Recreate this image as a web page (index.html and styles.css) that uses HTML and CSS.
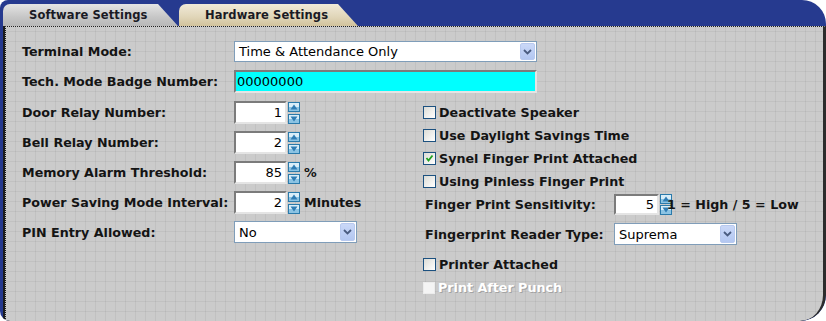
FILE: index.html
```html
<!DOCTYPE html>
<html>
<head>
<meta charset="utf-8">
<link rel="stylesheet" href="styles.css">
</head>
<body>
<div class="frame">
  <div class="tabs">
    <div class="tab tab-soft">Software Settings</div>
    <div class="tab tab-hard">Hardware Settings</div>
  </div>
  <div class="panel">
    <div class="row row-sel">
      <span class="lbl">Terminal Mode:</span>
      <div class="select sel-wide"><span class="val">Time &amp; Attendance Only</span><span class="btn"><svg width="9" height="6" viewBox="0 0 9 6"><path d="M1 1 L4.5 4.5 L8 1" fill="none" stroke="#4a5c80" stroke-width="1.8"/></svg></span></div>
    </div>
    <div class="row row-inp">
      <span class="lbl">Tech. Mode Badge Number:</span>
      <div class="inp inp-cyan">00000000</div>
    </div>
    <div class="cols">
      <div class="col-left">
        <div class="row row-spin">
          <span class="lbl">Door Relay Number:</span>
          <div class="inp inp-num">1</div>
          <div class="spin"><svg class="sp" width="12" height="10" viewBox="0 0 12 10"><rect x="0.5" y="0.5" width="11" height="9" fill="#8cc4e4" stroke="#2a7aab"/><rect x="1" y="1" width="10" height="4" fill="#d9eef9"/><path d="M2.5 7.5 L6 2.5 L9.5 7.5 Z" fill="#2f7cb4"/></svg><svg class="sp" width="12" height="10" viewBox="0 0 12 10"><rect x="0.5" y="0.5" width="11" height="9" fill="#8cc4e4" stroke="#2a7aab"/><rect x="1" y="1" width="10" height="4" fill="#d9eef9"/><path d="M2.5 2.5 L6 7.5 L9.5 2.5 Z" fill="#2f7cb4"/></svg></div>
        </div>
        <div class="row row-spin">
          <span class="lbl">Bell Relay Number:</span>
          <div class="inp inp-num">2</div>
          <div class="spin"><svg class="sp" width="12" height="10" viewBox="0 0 12 10"><rect x="0.5" y="0.5" width="11" height="9" fill="#8cc4e4" stroke="#2a7aab"/><rect x="1" y="1" width="10" height="4" fill="#d9eef9"/><path d="M2.5 7.5 L6 2.5 L9.5 7.5 Z" fill="#2f7cb4"/></svg><svg class="sp" width="12" height="10" viewBox="0 0 12 10"><rect x="0.5" y="0.5" width="11" height="9" fill="#8cc4e4" stroke="#2a7aab"/><rect x="1" y="1" width="10" height="4" fill="#d9eef9"/><path d="M2.5 2.5 L6 7.5 L9.5 2.5 Z" fill="#2f7cb4"/></svg></div>
        </div>
        <div class="row row-spin">
          <span class="lbl">Memory Alarm Threshold:</span>
          <div class="inp inp-num">85</div>
          <div class="spin"><svg class="sp" width="12" height="10" viewBox="0 0 12 10"><rect x="0.5" y="0.5" width="11" height="9" fill="#8cc4e4" stroke="#2a7aab"/><rect x="1" y="1" width="10" height="4" fill="#d9eef9"/><path d="M2.5 7.5 L6 2.5 L9.5 7.5 Z" fill="#2f7cb4"/></svg><svg class="sp" width="12" height="10" viewBox="0 0 12 10"><rect x="0.5" y="0.5" width="11" height="9" fill="#8cc4e4" stroke="#2a7aab"/><rect x="1" y="1" width="10" height="4" fill="#d9eef9"/><path d="M2.5 2.5 L6 7.5 L9.5 2.5 Z" fill="#2f7cb4"/></svg></div>
          <span class="unit">%</span>
        </div>
        <div class="row row-spin">
          <span class="lbl">Power Saving Mode Interval:</span>
          <div class="inp inp-num">2</div>
          <div class="spin"><svg class="sp" width="12" height="10" viewBox="0 0 12 10"><rect x="0.5" y="0.5" width="11" height="9" fill="#8cc4e4" stroke="#2a7aab"/><rect x="1" y="1" width="10" height="4" fill="#d9eef9"/><path d="M2.5 7.5 L6 2.5 L9.5 7.5 Z" fill="#2f7cb4"/></svg><svg class="sp" width="12" height="10" viewBox="0 0 12 10"><rect x="0.5" y="0.5" width="11" height="9" fill="#8cc4e4" stroke="#2a7aab"/><rect x="1" y="1" width="10" height="4" fill="#d9eef9"/><path d="M2.5 2.5 L6 7.5 L9.5 2.5 Z" fill="#2f7cb4"/></svg></div>
          <span class="unit">Minutes</span>
        </div>
        <div class="row row-sel2">
          <span class="lbl">PIN Entry Allowed:</span>
          <div class="select sel-small"><span class="val">No</span><span class="btn"><svg width="9" height="6" viewBox="0 0 9 6"><path d="M1 1 L4.5 4.5 L8 1" fill="none" stroke="#4a5c80" stroke-width="1.8"/></svg></span></div>
        </div>
      </div>
      <div class="col-right">
        <div class="row row-chk"><span class="chk"></span><span class="clbl">Deactivate Speaker</span></div>
        <div class="row row-chk"><span class="chk"></span><span class="clbl">Use Daylight Savings Time</span></div>
        <div class="row row-chk"><span class="chk"><svg width="11" height="11" viewBox="0 0 11 11"><path d="M2.5 5 L4.5 7.5 L8.5 2.5" fill="none" stroke="#21a121" stroke-width="1.8"/></svg></span><span class="clbl">Synel Finger Print Attached</span></div>
        <div class="row row-chk"><span class="chk"></span><span class="clbl">Using Pinless Finger Print</span></div>
        <div class="row row-sens">
          <span class="lbl lbl-r">Finger Print Sensitivity:</span>
          <div class="inp inp-sens">5</div>
          <div class="spin spin-s"><svg class="sp" width="12" height="10" viewBox="0 0 12 10"><rect x="0.5" y="0.5" width="11" height="9" fill="#8cc4e4" stroke="#2a7aab"/><rect x="1" y="1" width="10" height="4" fill="#d9eef9"/><path d="M2.5 7.5 L6 2.5 L9.5 7.5 Z" fill="#2f7cb4"/></svg><svg class="sp" width="12" height="10" viewBox="0 0 12 10"><rect x="0.5" y="0.5" width="11" height="9" fill="#8cc4e4" stroke="#2a7aab"/><rect x="1" y="1" width="10" height="4" fill="#d9eef9"/><path d="M2.5 2.5 L6 7.5 L9.5 2.5 Z" fill="#2f7cb4"/></svg></div>
          <span class="unit unit-over">1 = High / 5 = Low</span>
        </div>
        <div class="row row-sel2">
          <span class="lbl lbl-r">Fingerprint Reader Type:</span>
          <div class="select sel-small"><span class="val">Suprema</span><span class="btn"><svg width="9" height="6" viewBox="0 0 9 6"><path d="M1 1 L4.5 4.5 L8 1" fill="none" stroke="#4a5c80" stroke-width="1.8"/></svg></span></div>
        </div>
        <div class="row row-chk row-printer"><span class="chk"></span><span class="clbl">Printer Attached</span></div>
        <div class="row row-chk"><span class="chk chk-dis"></span><span class="clbl clbl-dis">Print After Punch</span></div>
      </div>
    </div>
  </div>
</div>
</body>
</html>
```

FILE: styles.css
```css
html, body {
  margin: 0;
  padding: 0;
  background: #ffffff;
}

.frame {
  width: 826px;
  height: 321px;
  display: flex;
  flex-direction: column;
  background: #263a8f;
  border-radius: 8px 24px 26px 10px;
  overflow: hidden;
  font-family: "DejaVu Sans", Verdana, sans-serif;
  color: #141414;
}

.tabs {
  height: 26px;
  display: flex;
  align-items: flex-end;
  gap: 1px;
  padding-left: 3px;
  box-sizing: border-box;
}

.tab {
  height: 22px;
  box-sizing: border-box;
  padding-left: 26px;
  display: flex;
  align-items: center;
  font-weight: bold;
  font-size: 11.5px;
  letter-spacing: 0.1px;
  color: #1a1a24;
  border-top-left-radius: 7px;
  clip-path: polygon(0 0, calc(100% - 20px) 0, 100% 100%, 0 100%);
}

.tab-soft {
  width: 175px;
  background: linear-gradient(#e4e4e4, #c6c6c6 60%, #b8b8b8);
}

.tab-hard {
  width: 179px;
  background: linear-gradient(#f1ead8, #e0d5b8 60%, #d2c39c);
}

.panel {
  flex: 1;
  margin-left: 5px;
  border-left: 1px dotted #1a1a1a;
  border-top: 1px dotted #222;
  border-right: 3px solid #2c2c2c;
  border-bottom-right-radius: 26px;
  box-shadow: -2px 0 0 #1d1d1d;
  background-color: #cbcbcb;
  background-image:
    repeating-linear-gradient(90deg, transparent 0 9px, rgba(0,0,0,0.05) 9px 10px),
    repeating-linear-gradient(0deg, transparent 0 9px, rgba(0,0,0,0.05) 9px 10px);
  padding: 14px 0 0 16px;
  box-sizing: border-box;
}

.row {
  display: flex;
  align-items: center;
}

.lbl {
  font-weight: bold;
  font-size: 12.7px;
  width: 212px;
  flex: none;
}

.lbl-r {
  width: 189px;
  margin-left: 2px;
}

.row-sel {
  height: 21px;
  margin-bottom: 8px;
}

.row-inp {
  height: 23px;
  margin-bottom: 8px;
}

.select {
  display: flex;
  align-items: stretch;
  background: #ffffff;
  border: 1px solid #7f9db9;
  box-sizing: border-box;
}

.select .val {
  flex: 1;
  display: flex;
  align-items: center;
  padding-left: 4px;
  font-size: 13px;
  color: #000;
}

.select .btn {
  width: 15px;
  margin: 1px;
  border-radius: 2px;
  background: linear-gradient(#cad8f8, #b3c7f1);
  border: 1px solid #b8c9ef;
  box-sizing: border-box;
  display: flex;
  align-items: center;
  justify-content: center;
}

.sel-wide {
  width: 303px;
  height: 21px;
}

.sel-small {
  width: 123px;
  height: 22px;
}

.inp {
  box-sizing: border-box;
  border-style: solid;
  border-width: 2px;
  border-color: #7b7b7b #e4e4e4 #e4e4e4 #7b7b7b;
  background: #ffffff;
  font-size: 13px;
  display: flex;
  align-items: center;
  color: #000;
}

.inp-cyan {
  width: 303px;
  height: 23px;
  background: #00ffff;
  padding-left: 1px;
}

.cols {
  display: flex;
}

.col-left {
  width: 401px;
  flex: none;
}

.col-right {
  flex: 1;
}

.row-spin {
  height: 23px;
  margin-bottom: 7px;
}

.inp-num {
  width: 53px;
  height: 23px;
  justify-content: flex-end;
  padding-right: 3px;
}

.spin {
  display: flex;
  flex-direction: column;
  justify-content: space-between;
  height: 22px;
  margin-left: 1px;
}

.sp {
  display: block;
}

.unit {
  font-weight: bold;
  font-size: 12.7px;
  margin-left: 4px;
}

.row-sel2 {
  height: 22px;
}

.row-chk {
  height: 23px;
}

.chk {
  width: 13px;
  height: 13px;
  box-sizing: border-box;
  border: 1px solid #1c5180;
  background: linear-gradient(135deg, #dcdcd6, #ffffff);
  margin-right: 3px;
  flex: none;
  display: flex;
  align-items: center;
  justify-content: center;
}

.chk svg {
  display: block;
}

.chk-dis {
  border: 1px solid #ececec;
  background: #f4f4f4;
  width: 12px;
  height: 12px;
}

.clbl {
  font-weight: bold;
  font-size: 12.7px;
}

.clbl-dis {
  color: #ffffff;
  text-shadow: 1px 1px 0 #a3a3a3;
}

.row-sens {
  height: 23px;
  margin-bottom: 7px;
}

.inp-sens {
  width: 45px;
  height: 21px;
  justify-content: flex-end;
  padding-right: 3px;
}

.spin-s {
  height: 21px;
  margin-left: 1px;
}

.unit-over {
  margin-left: -5px;
}

.row-printer {
  margin-top: 8px;
}
```
